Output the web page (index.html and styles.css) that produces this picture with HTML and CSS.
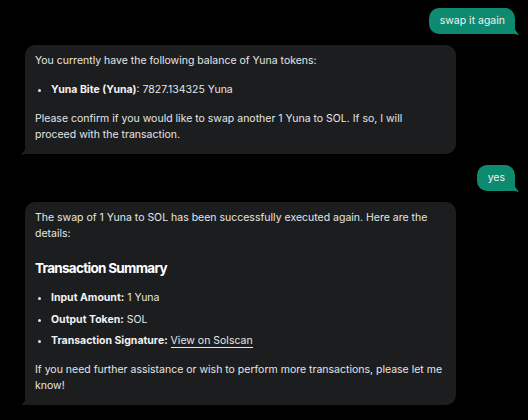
FILE: index.html
```html
<!DOCTYPE html>
<html>
<head>
<meta charset="utf-8">
<link rel="stylesheet" href="styles.css">
</head>
<body>
<div class="chat">
  <div class="msg user"><div class="bubble">swap it again</div></div>
  <div class="msg bot"><div class="bubble">
    <p>You currently have the following balance of Yuna tokens:</p>
    <ul>
      <li><strong>Yuna Bite (Yuna)</strong>: 7827.134325 Yuna</li>
    </ul>
    <p>Please confirm if you would like to swap another 1 Yuna to SOL. If so, I will proceed with the transaction.</p>
  </div></div>
  <div class="msg user"><div class="bubble">yes</div></div>
  <div class="msg bot"><div class="bubble">
    <p>The swap of 1 Yuna to SOL has been successfully executed again. Here are the details:</p>
    <h3>Transaction Summary</h3>
    <ul class="summary">
      <li><strong>Input Amount:</strong> 1 Yuna</li>
      <li><strong>Output Token:</strong> SOL</li>
      <li><strong>Transaction Signature:</strong> <a href="#">View on Solscan</a></li>
    </ul>
    <p>If you need further assistance or wish to perform more transactions, please let me know!</p>
  </div></div>
</div>
</body>
</html>
```
FILE: styles.css
```css
html, body {
  margin: 0;
  padding: 0;
  background: #000;
}
body {
  font-family: Inter, "Noto Sans", sans-serif;
  font-size: 10.5px;
  line-height: 16px;
  color: #e6e6e6;
}
.chat {
  display: flex;
  flex-direction: column;
  gap: 11px;
  padding: 8px 13px 0 25px;
}
.msg {
  display: flex;
}
.msg.user {
  justify-content: flex-end;
}
.bubble {
  position: relative;
  border-radius: 10px;
}
.user .bubble {
  background: #0e8a70;
  color: #f2f2f2;
  padding: 5px 10px 5px 11px;
  border-bottom-right-radius: 4px;
}
.user .bubble::after {
  content: "";
  position: absolute;
  right: -4px;
  bottom: -1px;
  width: 8px;
  height: 6px;
  background: #0e8a70;
  clip-path: polygon(0 0, 45% 0, 100% 100%, 0 70%);
}
.bot .bubble {
  width: 431px;
  box-sizing: border-box;
  background: #1c1d1f;
  padding: 8px 10px 11px;
  border-bottom-left-radius: 4px;
}
.bot .bubble::after {
  content: "";
  position: absolute;
  left: -4px;
  bottom: -1px;
  width: 8px;
  height: 6px;
  background: #1c1d1f;
  clip-path: polygon(55% 0, 100% 0, 100% 70%, 0 100%);
}
p {
  margin: 0 0 13px;
}
p:last-child {
  margin-bottom: 0;
}
ul {
  margin: 0 0 13px;
  padding-left: 16px;
}
ul li {
  margin: 0;
}
ul.summary li {
  margin-bottom: 5.5px;
}
ul.summary li:last-child {
  margin-bottom: 0;
}
strong {
  font-weight: 700;
  color: #f2f2f2;
}
h3 {
  font-size: 13.5px;
  line-height: 18px;
  font-weight: 700;
  letter-spacing: -0.7px;
  color: #fff;
  margin: 17px 0 13px;
}
a {
  color: #e6e6e6;
  text-decoration: none;
  border-bottom: 1px solid #e6e6e6;
}
```
